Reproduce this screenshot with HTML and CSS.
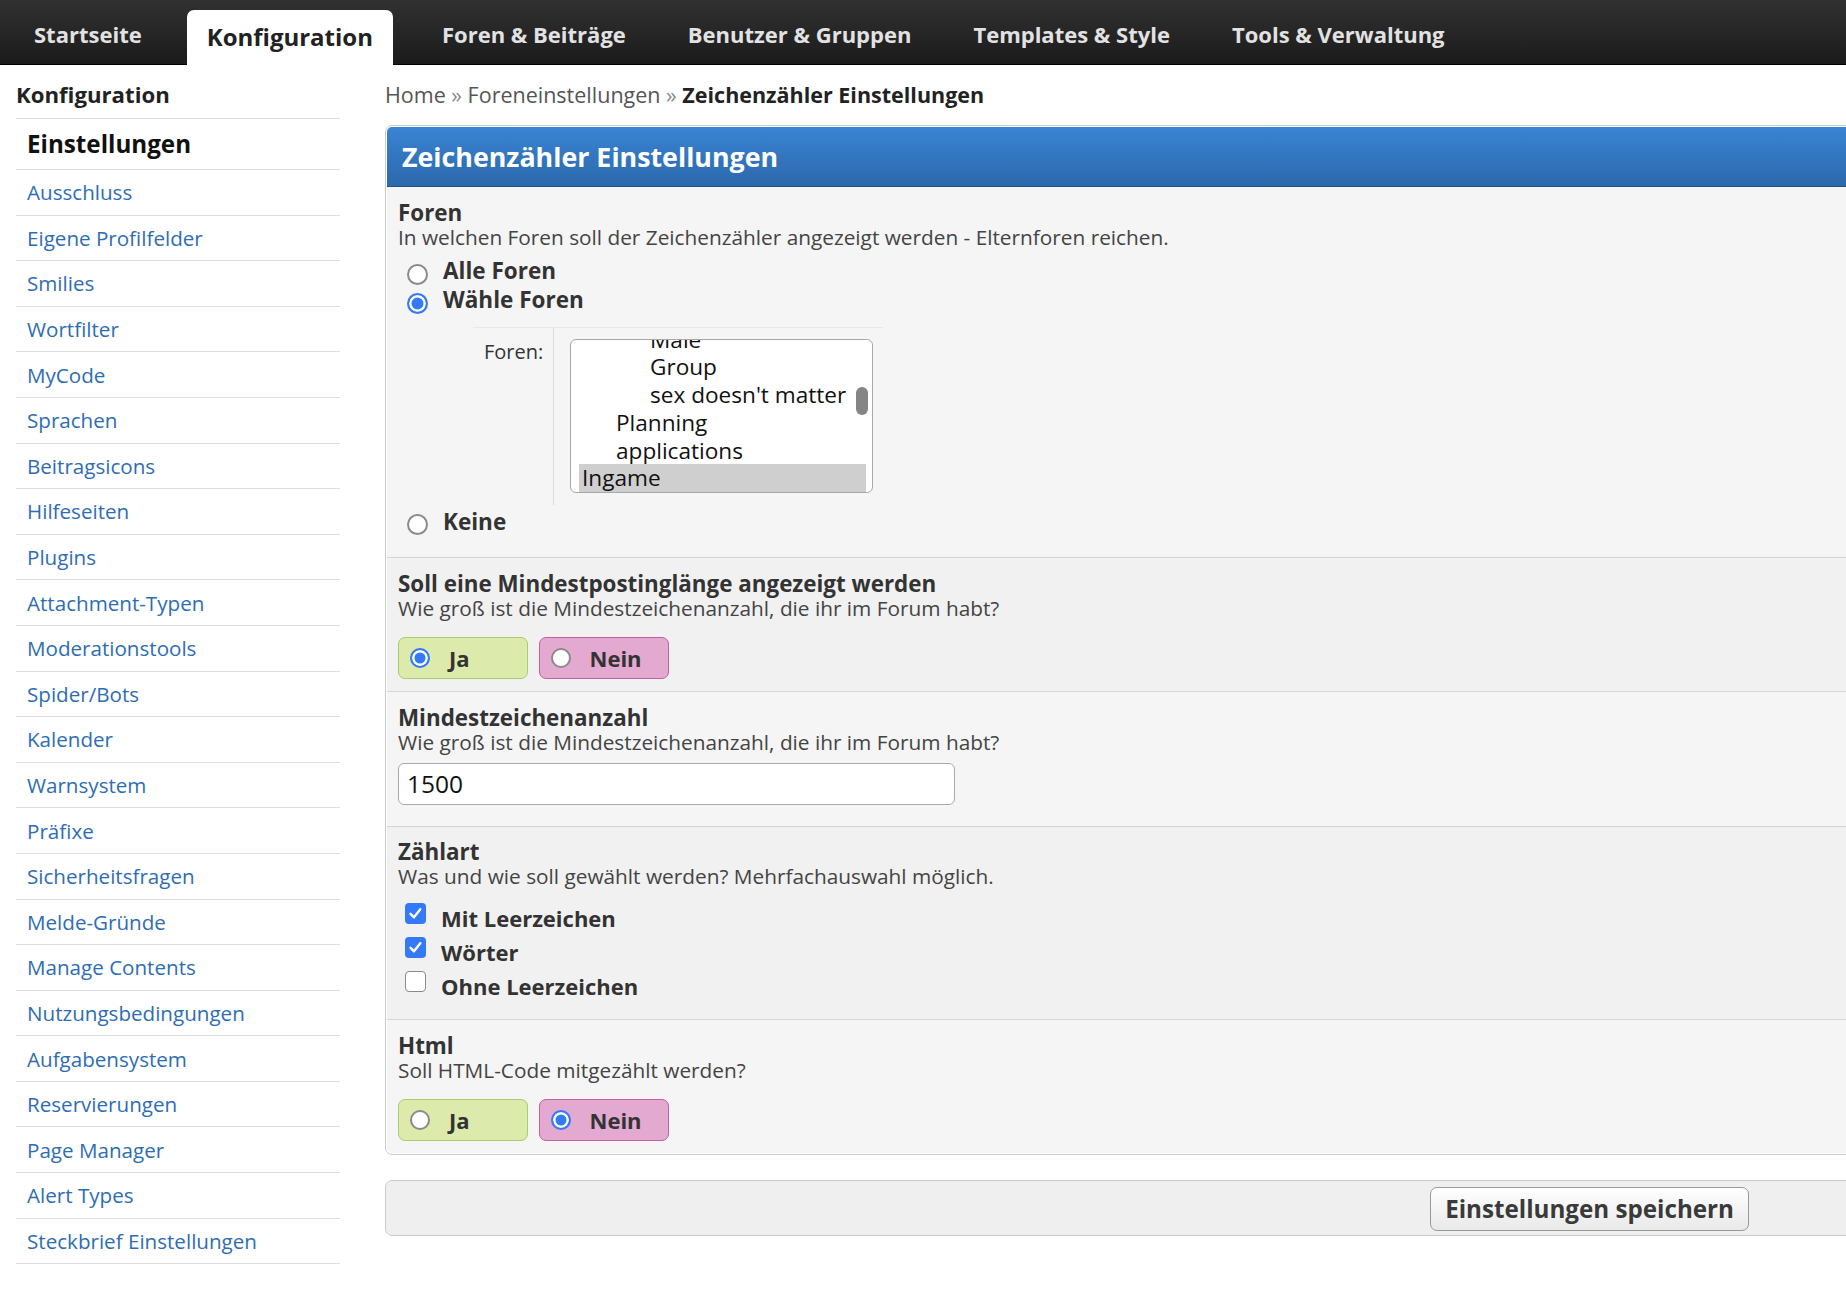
FILE: index.html
```html
<!DOCTYPE html>
<html lang="de">
<head>
<meta charset="utf-8">
<title>Zeichenzähler Einstellungen</title>
<link rel="stylesheet" href="styles.css">
</head>
<body>
<nav class="topnav">
  <a class="tab">Startseite</a>
  <a class="tab active">Konfiguration</a>
  <a class="tab">Foren &amp; Beiträge</a>
  <a class="tab">Benutzer &amp; Gruppen</a>
  <a class="tab">Templates &amp; Style</a>
  <a class="tab">Tools &amp; Verwaltung</a>
</nav>
<div class="page">
  <aside class="sidebar">
    <h2 class="side-title">Konfiguration</h2>
    <ul class="side-menu">
      <li class="current">Einstellungen</li>
      <li><a>Ausschluss</a></li>
      <li><a>Eigene Profilfelder</a></li>
      <li><a>Smilies</a></li>
      <li><a>Wortfilter</a></li>
      <li><a>MyCode</a></li>
      <li><a>Sprachen</a></li>
      <li><a>Beitragsicons</a></li>
      <li><a>Hilfeseiten</a></li>
      <li><a>Plugins</a></li>
      <li><a>Attachment-Typen</a></li>
      <li><a>Moderationstools</a></li>
      <li><a>Spider/Bots</a></li>
      <li><a>Kalender</a></li>
      <li><a>Warnsystem</a></li>
      <li><a>Präfixe</a></li>
      <li><a>Sicherheitsfragen</a></li>
      <li><a>Melde-Gründe</a></li>
      <li><a>Manage Contents</a></li>
      <li><a>Nutzungsbedingungen</a></li>
      <li><a>Aufgabensystem</a></li>
      <li><a>Reservierungen</a></li>
      <li><a>Page Manager</a></li>
      <li><a>Alert Types</a></li>
      <li><a>Steckbrief Einstellungen</a></li>
    </ul>
  </aside>
  <main class="content">
    <div class="breadcrumb"><a>Home</a> <span class="sep">»</span> <a>Foreneinstellungen</a> <span class="sep">»</span> <b>Zeichenzähler Einstellungen</b></div>
    <div class="panel">
      <div class="panel-head">Zeichenzähler Einstellungen</div>

      <div class="row first">
        <div class="row-title">Foren</div>
        <div class="row-desc">In welchen Foren soll der Zeichenzähler angezeigt werden - Elternforen reichen.</div>
        <div class="choice-list">
          <div class="choice"><span class="radio"></span><span class="choice-label">Alle Foren</span></div>
          <div class="choice"><span class="radio checked"></span><span class="choice-label">Wähle Foren</span></div>
        </div>
        <div class="forum-select">
          <div class="fs-label">Foren:</div>
          <div class="fs-cell">
            <div class="listbox">
              <div class="opts">
                <div class="opt lvl2">Male</div>
                <div class="opt lvl2">Group</div>
                <div class="opt lvl2">sex doesn't matter</div>
                <div class="opt lvl1">Planning</div>
                <div class="opt lvl1">applications</div>
                <div class="opt selected">Ingame</div>
              </div>
              <span class="thumb"></span>
            </div>
          </div>
        </div>
        <div class="choice keine"><span class="radio"></span><span class="choice-label">Keine</span></div>
      </div>

      <div class="row alt">
        <div class="row-title">Soll eine Mindestpostinglänge angezeigt werden</div>
        <div class="row-desc">Wie groß ist die Mindestzeichenanzahl, die ihr im Forum habt?</div>
        <div class="yesno">
          <div class="yn yes"><span class="radio checked"></span><span class="yn-label">Ja</span></div>
          <div class="yn no"><span class="radio"></span><span class="yn-label">Nein</span></div>
        </div>
      </div>

      <div class="row">
        <div class="row-title">Mindestzeichenanzahl</div>
        <div class="row-desc">Wie groß ist die Mindestzeichenanzahl, die ihr im Forum habt?</div>
        <div class="textbox">1500</div>
      </div>

      <div class="row alt">
        <div class="row-title">Zählart</div>
        <div class="row-desc">Was und wie soll gewählt werden? Mehrfachauswahl möglich.</div>
        <div class="checks">
          <div class="check"><span class="cbox checked"><svg viewBox="0 0 21 21" width="21" height="21"><path d="M5.5 10.8 L9 14.3 L15.3 6.2" fill="none" stroke="#fff" stroke-width="2.4" stroke-linecap="round" stroke-linejoin="round"/></svg></span><span class="check-label">Mit Leerzeichen</span></div>
          <div class="check"><span class="cbox checked"><svg viewBox="0 0 21 21" width="21" height="21"><path d="M5.5 10.8 L9 14.3 L15.3 6.2" fill="none" stroke="#fff" stroke-width="2.4" stroke-linecap="round" stroke-linejoin="round"/></svg></span><span class="check-label">Wörter</span></div>
          <div class="check"><span class="cbox"></span><span class="check-label">Ohne Leerzeichen</span></div>
        </div>
      </div>

      <div class="row last">
        <div class="row-title">Html</div>
        <div class="row-desc">Soll HTML-Code mitgezählt werden?</div>
        <div class="yesno">
          <div class="yn yes"><span class="radio"></span><span class="yn-label">Ja</span></div>
          <div class="yn no"><span class="radio checked"></span><span class="yn-label">Nein</span></div>
        </div>
      </div>
    </div>

    <div class="submit-bar">
      <button class="submit" type="button">Einstellungen speichern</button>
    </div>
  </main>
</div>
</body>
</html>
```

FILE: styles.css
```css
html, body {
  margin: 0;
  padding: 0;
  overflow: hidden;
  background: #fff;
}
body {
  font-family: "Open Sans", "Noto Sans", sans-serif;
  color: #333;
  width: 1846px;
  height: 1290px;
}
a { text-decoration: none; }

/* top navigation */
.topnav {
  display: flex;
  align-items: flex-end;
  gap: 22px;
  height: 64px;
  padding-left: 14px;
  background: linear-gradient(#313131, #1b1b1b);
  border-bottom: 1px solid #000;
}
.tab {
  height: 54px;
  line-height: 48px;
  padding: 0 20px;
  font-size: 22px;
  font-weight: 700;
  color: #e2e2e2;
  white-space: nowrap;
}
.tab.active {
  height: 55px;
  margin: 0 7px -1px 3px;
  line-height: 53px;
  font-size: 24px;
  color: #222;
  background: #fff;
  border-radius: 7px 7px 0 0;
}

/* page */
.page {
  display: flex;
  align-items: flex-start;
}
.sidebar {
  width: 324px;
  margin-left: 16px;
  flex: none;
}
.side-title {
  margin: 15px 0 0;
  padding-bottom: 8px;
  font-size: 22.2px;
  line-height: 30px;
  font-weight: 700;
  color: #222;
  border-bottom: 1px solid #ddd;
}
.side-menu {
  list-style: none;
  margin: 0;
  padding: 0;
}
.side-menu li {
  padding: 8.3px 11px;
  line-height: 28px;
  font-size: 20.6px;
  border-bottom: 1px solid #ddd;
}
.side-menu li a {
  color: #2e6db3;
}
.side-menu li.current {
  padding: 10px 11px;
  line-height: 30px;
  font-size: 24.2px;
  font-weight: 700;
  color: #111;
}

.content {
  flex: 1;
  margin-left: 45px;
  margin-right: -20px;
}
.breadcrumb {
  margin-top: 15px;
  line-height: 30px;
  font-size: 21.5px;
  color: #555;
  white-space: nowrap;
}
.breadcrumb a { color: #555; }
.breadcrumb .sep { color: #888; }
.breadcrumb b { color: #222; font-weight: 700; }

/* panel */
.panel {
  margin-top: 15px;
  border: 1px solid #ccc;
  border-radius: 7px;
  padding: 1px;
  background: #fff;
}
.panel-head {
  height: 59px;
  line-height: 59px;
  padding-left: 15px;
  border-bottom: 1px solid #22517f;
  border-radius: 5px 5px 0 0;
  background: linear-gradient(#3a84d4, #2c68ab);
  color: #fff;
  font-size: 26.8px;
  font-weight: 700;
}
.row {
  padding: 12.5px 11px 12px;
  background: #f5f5f5;
  border-bottom: 1px solid #d6d6d6;
}
.row.alt { background: #f1f1f1; }
.row.first { padding-bottom: 18px; }
.row.last {
  border-bottom: none;
  padding-top: 13.5px;
  border-radius: 0 0 5px 5px;
}
.row-title {
  line-height: 25px;
  font-size: 22.4px;
  font-weight: 700;
  color: #333;
}
.row-desc {
  line-height: 25px;
  font-size: 20.8px;
  color: #444;
}

/* radios */
.radio {
  display: inline-block;
  box-sizing: border-box;
  width: 21px;
  height: 21px;
  border-radius: 50%;
  border: 2px solid #8a8a8a;
  background: #fff;
  flex: none;
}
.radio.checked {
  border-color: #3479f6;
  background: #3479f6;
  box-shadow: inset 0 0 0 2.5px #fff;
}

.choice-list { margin-top: 10px; }
.choice {
  display: flex;
  align-items: center;
  height: 29px;
  padding-left: 9px;
}
.choice-label {
  margin-left: 15px;
  padding-bottom: 7px;
  font-size: 22.5px;
  font-weight: 700;
  color: #333;
}
.choice.keine { margin-top: 5.5px; }

.forum-select {
  display: flex;
  width: 410px;
  margin: 9px 0 0 75px;
  border-top: 1px solid #e8e8e8;
}
.fs-label {
  width: 81px;
  box-sizing: border-box;
  padding: 10px 0 0 11px;
  border-right: 1px solid #dcdcdc;
  font-size: 20px;
  line-height: 28px;
  color: #333;
  flex: none;
}
.fs-cell {
  padding: 11px 0 12px 16px;
}
.listbox {
  position: relative;
  box-sizing: border-box;
  width: 303px;
  height: 154px;
  border: 1px solid #a9a9a9;
  border-radius: 6px;
  background: #fff;
  overflow: hidden;
  padding: 0 6px 0 8px;
}
.opts { margin-top: -14px; }
.opt {
  height: 27.8px;
  line-height: 27.8px;
  padding-left: 3px;
  font-size: 22.6px;
  color: #111;
  white-space: nowrap;
}
.opt.lvl1 { padding-left: 37px; }
.opt.lvl2 { padding-left: 71px; }
.opt.selected { background: #cfcfcf; }
.thumb {
  position: absolute;
  right: 4px;
  top: 47px;
  width: 12px;
  height: 28px;
  border-radius: 6px;
  background: #858585;
}

/* yes / no */
.yesno {
  display: flex;
  gap: 10.5px;
  margin-top: 16.5px;
}
.row.last .yesno { margin-top: 15.5px; }
.yn {
  display: flex;
  align-items: center;
  box-sizing: border-box;
  width: 130px;
  height: 42px;
  padding-left: 11px;
  border-radius: 7px;
}
.yn.yes { background: #dceaab; border: 1px solid #a9cc6c; }
.yn.no { background: #e3a9d1; border: 1px solid #c3609e; }
.yn .radio { width: 20px; height: 20px; }
.yn-label {
  margin-left: 19px;
  font-size: 22px;
  font-weight: 700;
  color: #333;
}

/* text input */
.textbox {
  box-sizing: border-box;
  width: 557px;
  height: 42px;
  margin: 8.5px 0 8.5px;
  padding-left: 8px;
  border: 1px solid #aaa;
  border-radius: 6px;
  background: #fff;
  font-size: 24.5px;
  line-height: 40px;
  color: #111;
}

/* checkboxes */
.checks { margin-top: 11.5px; padding-bottom: 4px; }
.check {
  display: flex;
  align-items: flex-start;
  height: 34px;
  padding-left: 7px;
}
.cbox {
  display: inline-block;
  box-sizing: border-box;
  width: 21px;
  height: 21px;
  margin-top: 2px;
  border-radius: 4px;
  border: 1.5px solid #8a8a8a;
  background: #fff;
  flex: none;
}
.cbox.checked {
  border: none;
  background: #3479f6;
}
.cbox svg { display: block; }
.check-label {
  margin-left: 15px;
  line-height: 34px;
  font-size: 22px;
  font-weight: 700;
  color: #333;
}

/* submit */
.submit-bar {
  display: flex;
  justify-content: flex-end;
  margin-top: 25px;
  padding: 6px 116px 4px 0;
  border: 1px solid #ccc;
  border-radius: 7px;
  background: #efefef;
}
.submit {
  height: 44px;
  padding: 0 14px;
  border: 1px solid #999;
  border-radius: 7px;
  background: linear-gradient(#ffffff, #e9e9e9);
  font-family: "Open Sans", "Noto Sans", sans-serif;
  font-size: 24.2px;
  font-weight: 700;
  color: #3a3a3a;
}
```
